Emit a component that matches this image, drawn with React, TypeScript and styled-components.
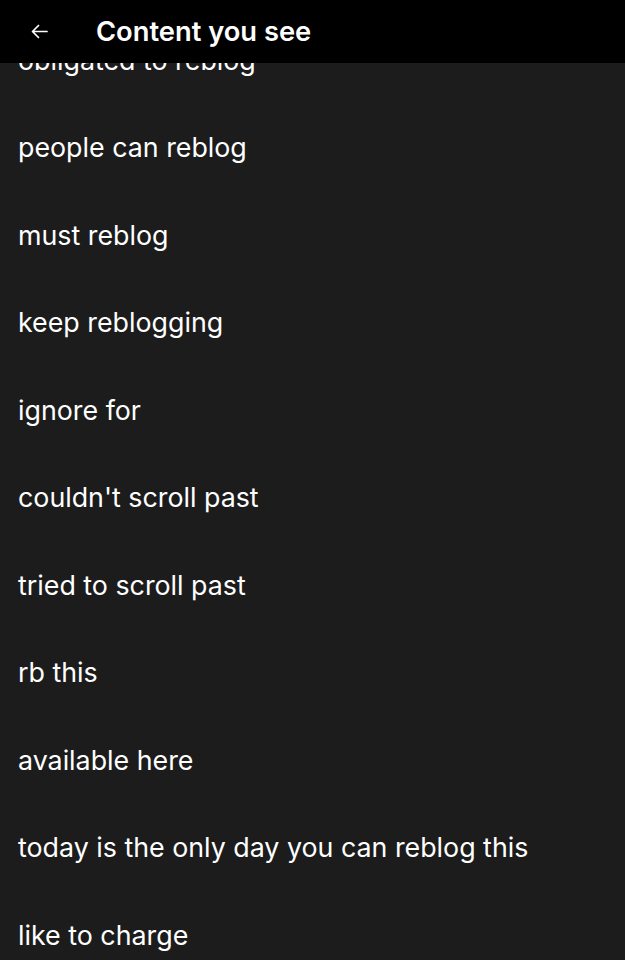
import React from "react";
import styled, { createGlobalStyle } from "styled-components";

const GlobalStyle = createGlobalStyle`
  html, body {
    margin: 0;
    padding: 0;
    background: #1c1c1c;
  }
  body {
    font-family: Inter, "Noto Sans", sans-serif;
    color: #ffffff;
    overflow: hidden;
  }
`;

const items = [
  "obligated to reblog",
  "people can reblog",
  "must reblog",
  "keep reblogging",
  "ignore for",
  "couldn't scroll past",
  "tried to scroll past",
  "rb this",
  "available here",
  "today is the only day you can reblog this",
  "like to charge",
];

const Page = styled.div`
  display: flex;
  flex-direction: column;
  height: 960px;
  overflow: hidden;
  background: #1c1c1c;
`;

const Header = styled.header`
  position: relative;
  z-index: 2;
  display: flex;
  align-items: center;
  gap: 47px;
  height: 63px;
  padding: 0 0 0 30px;
  background: #000000;
  flex-shrink: 0;
`;

const BackButton = styled.button`
  display: flex;
  align-items: center;
  justify-content: center;
  border: none;
  background: none;
  padding: 0;
  width: 19px;
  height: 19px;
  color: #ffffff;
`;

const Title = styled.h1`
  margin: 0;
  font-size: 27.3px;
  font-weight: 600;
  color: #ffffff;
`;

// the list is scrolled a little, so its first row sits under the header
const List = styled.ul`
  list-style: none;
  margin: -47px 0 0;
  padding: 0;
`;

const Row = styled.li`
  display: flex;
  align-items: center;
  height: 87.5px;
  padding: 0 18px;
  font-size: 26.8px;
  font-weight: 400;
  color: #ffffff;
`;

export default function App() {
  return (
    <>
      <GlobalStyle />
      <Page>
        <Header>
          <BackButton aria-label="Back">
            <svg width="19" height="19" viewBox="0 0 19 19" fill="none">
              <path
                d="M17 9.5H2.5M8.5 3.5L2.5 9.5L8.5 15.5"
                stroke="currentColor"
                strokeWidth="1.7"
                strokeLinecap="round"
                strokeLinejoin="round"
              />
            </svg>
          </BackButton>
          <Title>Content you see</Title>
        </Header>
        <List>
          {items.map((item) => (
            <Row key={item}>{item}</Row>
          ))}
        </List>
      </Page>
    </>
  );
}
